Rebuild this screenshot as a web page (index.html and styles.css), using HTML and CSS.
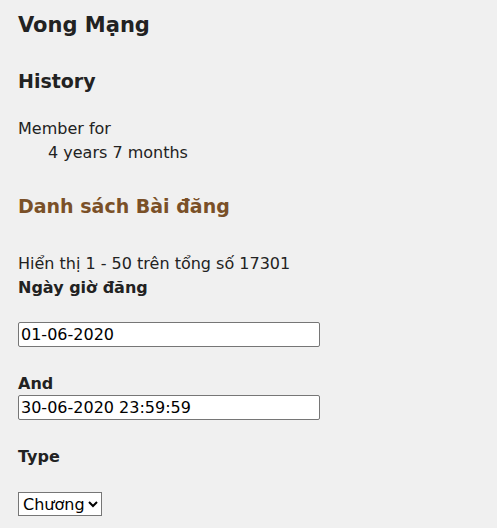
FILE: index.html
```html
<!DOCTYPE html>
<html lang="vi">
<head>
<meta charset="utf-8">
<title>Vong Mạng</title>
<link rel="stylesheet" href="styles.css">
</head>
<body>
<h1 class="title">Vong Mạng</h1>
<h2 class="section">History</h2>
<dl class="history">
  <dt>Member for</dt>
  <dd>4 years 7 months</dd>
</dl>
<h2 class="section brown">Danh sách Bài đăng</h2>
<div class="summary">Hiển thị 1 - 50 trên tổng số 17301</div>
<form class="filters">
  <div class="field">
    <label class="label">Ngày giờ đăng</label>
    <input class="text" type="text" value="01-06-2020">
  </div>
  <div class="field and">
    <label class="label">And</label>
    <input class="text" type="text" value="30-06-2020 23:59:59">
  </div>
  <div class="field">
    <label class="label">Type</label>
    <select class="select"><option>Chương</option></select>
  </div>
</form>
</body>
</html>
```
FILE: styles.css
```css
html, body {
  background: #f0f0f0;
}
body {
  margin: 0;
  padding: 10px 18px 0;
  font-family: "DejaVu Sans", Verdana, sans-serif;
  font-size: 16px;
  line-height: 24px;
  color: #222;
}
.title {
  font-size: 21px;
  line-height: 30px;
  margin: 0 0 28px;
}
.section {
  font-size: 19px;
  line-height: 26px;
  margin: 0 0 23px;
}
.brown {
  color: #7a5028;
  margin-bottom: 33px;
}
.history {
  margin: 0 0 28px;
}
.history dd {
  margin-left: 30px;
}
.field {
  display: flex;
  flex-direction: column;
  align-items: flex-start;
}
.label {
  font-weight: bold;
  margin-bottom: 22px;
}
.and .label {
  margin-bottom: 0;
  line-height: 23px;
}
.text {
  width: 302px;
  height: 25px;
  box-sizing: border-box;
  border: 1px solid #767676;
  border-radius: 2px;
  background: #fff;
  font-family: "DejaVu Sans", Verdana, sans-serif;
  font-size: 16px;
  color: #000;
  padding: 0 2px;
  margin-bottom: 25px;
}
.and .text {
  margin-bottom: 25px;
}
.select {
  font-family: "DejaVu Sans", Verdana, sans-serif;
  font-size: 16px;
  height: 24px;
  border: 1px solid #767676;
  border-radius: 0;
  background: #fff;
  color: #000;
  margin-top: 1px;
}
```
